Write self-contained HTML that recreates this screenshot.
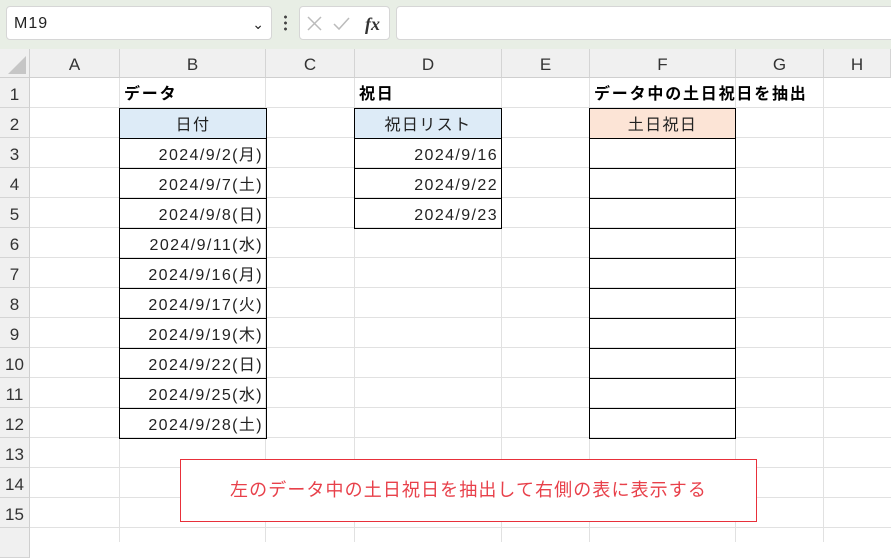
<!DOCTYPE html>
<html><head><meta charset="utf-8"><style>
body{margin:0;width:891px;height:542px;overflow:hidden;background:#fff;position:relative;font-family:"Liberation Sans","Noto Sans CJK JP",sans-serif;}
div{position:absolute;box-sizing:border-box;}
.top{left:0;top:0;width:891px;height:49px;background:#e8eee5;}
.nb{left:6px;top:6px;width:266px;height:34px;background:#fff;border:1px solid #d6d6d6;border-radius:4px;font-size:16px;line-height:34px;padding-left:7px;color:#222;letter-spacing:1px;}
.fx{left:299px;top:6px;width:91px;height:34px;background:#fff;border:1px solid #d6d6d6;border-radius:4px;}
.fb{left:396px;top:6px;width:500px;height:34px;background:#fff;border:1px solid #d6d6d6;border-radius:4px;}
.ch{top:49px;height:29px;background:#f0f0f0;border-right:1px solid #d4d4d4;border-bottom:1px solid #cfcfcf;text-align:center;line-height:31px;font-size:17px;color:#333;}
.rh{left:0;width:30px;height:30px;background:#f0f0f0;border-bottom:1px solid #d4d4d4;border-right:1px solid #cfcfcf;text-align:center;line-height:33px;font-size:17px;color:#333;}
.v{top:78px;width:1px;height:464px;background:#e1e1e1;}
.h{left:30px;width:861px;height:1px;background:#e1e1e1;}
.c{height:31px;line-height:33px;font-size:16px;color:#222;letter-spacing:1.4px;white-space:nowrap;}
.bx{border:1px solid #000;}
.r{text-align:right;padding-right:3px;}
.ct{text-align:center;}
.b{font-weight:bold;color:#000;padding-left:4px;letter-spacing:1.8px;}
</style></head><body>
<div class="top"></div>
<div class="nb">M19<span style="position:absolute;right:6px;top:0;font-size:14px;">&#8964;</span></div>
<div style="left:284px;top:14px;width:3px;height:18px;background:radial-gradient(circle,#444 1.3px,transparent 1.6px) 0 0/3px 6px;"></div>
<div class="fx"><svg width="91" height="34" style="position:absolute;left:0;top:0"><path d="M8 10l13 13M21 10L8 23" stroke="#bbb" stroke-width="1.5" fill="none"/><path d="M34 17l5 5 10-11" stroke="#bbb" stroke-width="1.5" fill="none"/><text x="65" y="23" font-family="Liberation Serif" font-style="italic" font-weight="bold" font-size="18" fill="#333">fx</text></svg></div>
<div class="fb"></div>
<div style="left:0;top:49px;width:30px;height:29px;background:#f0f0f0;border-right:1px solid #cfcfcf;border-bottom:1px solid #cfcfcf;"><svg width="30" height="29"><path d="M26 7L26 25L8 25Z" fill="#c6c6c6"/></svg></div>
<div class="ch" style="left:30px;width:90px">A</div>
<div class="ch" style="left:120px;width:146px">B</div>
<div class="ch" style="left:266px;width:89px">C</div>
<div class="ch" style="left:355px;width:147px">D</div>
<div class="ch" style="left:502px;width:88px">E</div>
<div class="ch" style="left:590px;width:146px">F</div>
<div class="ch" style="left:736px;width:88px">G</div>
<div class="ch" style="left:824px;width:67px">H</div>
<div class="rh" style="top:78px">1</div><div class="rh" style="top:108px">2</div><div class="rh" style="top:138px">3</div><div class="rh" style="top:168px">4</div><div class="rh" style="top:198px">5</div><div class="rh" style="top:228px">6</div><div class="rh" style="top:258px">7</div><div class="rh" style="top:288px">8</div><div class="rh" style="top:318px">9</div><div class="rh" style="top:348px">10</div><div class="rh" style="top:378px">11</div><div class="rh" style="top:408px">12</div><div class="rh" style="top:438px">13</div><div class="rh" style="top:468px">14</div><div class="rh" style="top:498px">15</div><div class="rh" style="top:528px"></div>
<div class="v" style="left:119px"></div><div class="v" style="left:265px"></div><div class="v" style="left:354px"></div><div class="v" style="left:501px"></div><div class="v" style="left:589px"></div><div class="v" style="left:735px"></div><div class="v" style="left:823px"></div>
<div class="h" style="top:107px"></div><div class="h" style="top:137px"></div><div class="h" style="top:167px"></div><div class="h" style="top:197px"></div><div class="h" style="top:227px"></div><div class="h" style="top:257px"></div><div class="h" style="top:287px"></div><div class="h" style="top:317px"></div><div class="h" style="top:347px"></div><div class="h" style="top:377px"></div><div class="h" style="top:407px"></div><div class="h" style="top:437px"></div><div class="h" style="top:467px"></div><div class="h" style="top:497px"></div><div class="h" style="top:527px"></div>

<div class="c b" style="left:120px;top:78px">データ</div>
<div class="c b" style="left:355px;top:78px">祝日</div>
<div class="c b" style="left:590px;top:78px">データ中の土日祝日を抽出</div>

<div class="c bx ct" style="left:119px;top:108px;width:148px;background:#ddebf7">日付</div>
<div class="c bx r" style="left:119px;top:138px;width:148px">2024/9/2(月)</div>
<div class="c bx r" style="left:119px;top:168px;width:148px">2024/9/7(土)</div>
<div class="c bx r" style="left:119px;top:198px;width:148px">2024/9/8(日)</div>
<div class="c bx r" style="left:119px;top:228px;width:148px">2024/9/11(水)</div>
<div class="c bx r" style="left:119px;top:258px;width:148px">2024/9/16(月)</div>
<div class="c bx r" style="left:119px;top:288px;width:148px">2024/9/17(火)</div>
<div class="c bx r" style="left:119px;top:318px;width:148px">2024/9/19(木)</div>
<div class="c bx r" style="left:119px;top:348px;width:148px">2024/9/22(日)</div>
<div class="c bx r" style="left:119px;top:378px;width:148px">2024/9/25(水)</div>
<div class="c bx r" style="left:119px;top:408px;width:148px">2024/9/28(土)</div>

<div class="c bx ct" style="left:354px;top:108px;width:148px;background:#ddebf7">祝日リスト</div>
<div class="c bx r" style="left:354px;top:138px;width:148px">2024/9/16</div>
<div class="c bx r" style="left:354px;top:168px;width:148px">2024/9/22</div>
<div class="c bx r" style="left:354px;top:198px;width:148px">2024/9/23</div>

<div class="c bx ct" style="left:589px;top:108px;width:147px;background:#fce4d6">土日祝日</div>
<div class="c bx" style="left:589px;top:138px;width:147px"></div>
<div class="c bx" style="left:589px;top:168px;width:147px"></div>
<div class="c bx" style="left:589px;top:198px;width:147px"></div>
<div class="c bx" style="left:589px;top:228px;width:147px"></div>
<div class="c bx" style="left:589px;top:258px;width:147px"></div>
<div class="c bx" style="left:589px;top:288px;width:147px"></div>
<div class="c bx" style="left:589px;top:318px;width:147px"></div>
<div class="c bx" style="left:589px;top:348px;width:147px"></div>
<div class="c bx" style="left:589px;top:378px;width:147px"></div>
<div class="c bx" style="left:589px;top:408px;width:147px"></div>

<div style="left:180px;top:459px;width:577px;height:63px;background:#fff;border:1px solid #e8303a;color:#e8404a;font-size:18px;line-height:60px;text-align:center;letter-spacing:1.1px;">左のデータ中の土日祝日を抽出して右側の表に表示する</div>
</body></html>
